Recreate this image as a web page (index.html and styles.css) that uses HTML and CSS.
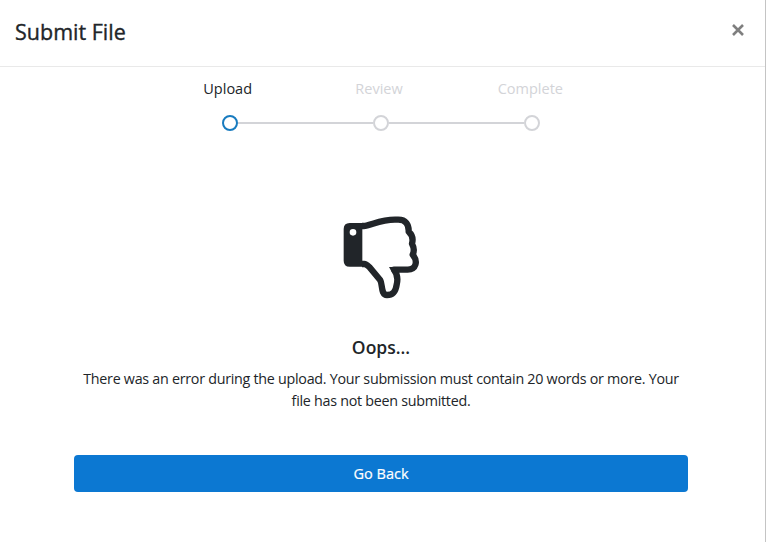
FILE: index.html
```
<!DOCTYPE html>
<html lang="en">
<head>
    <meta charset="UTF-8">
    <meta name="viewport" content="width=device-width, initial-scale=1.0">
    <title>Submit File</title>
    <link rel="stylesheet" href="styles.css">
</head>
<body>
    <div class="modal">
        <div class="modal-header">
            <h1 class="modal-title">Submit File</h1>
            <button class="close-button" aria-label="Close">
                <svg width="14" height="14" viewBox="0 0 14 14"><path d="M2 2L12 12M12 2L2 12"/></svg>
            </button>
        </div>
        <div class="modal-body">
            <ol class="steps">
                <li class="step active"><span class="step-label">Upload</span><span class="step-track"><span class="step-dot"></span></span></li>
                <li class="step"><span class="step-label">Review</span><span class="step-track"><span class="step-dot"></span></span></li>
                <li class="step"><span class="step-label">Complete</span><span class="step-track"><span class="step-dot"></span></span></li>
            </ol>
            <svg class="thumbs-down" viewBox="38 34 231 249">
                <path class="cuff" fill-rule="evenodd" d="M58 55H96V186H58Q40 186 40 168V73Q40 55 58 55ZM68 73A10 10 0 1 0 68 93A10 10 0 1 0 68 73Z"/>
                <path class="hand" d="M95 64H100C122 62 150 45 194 45H204C226 45 236 59 235 81C245 90 249 103 245 117C251 128 252 140 247 150C264 170 257 195 232 195H191C203 210 202 228 199 240C196 260 189 271 170 271C151 271 157 239 150 227L117 187Q107 178 102 178H95"/>
                <path class="cuff" d="M176 187H200V204H186Q181 196 176 187Z"/>
            </svg>
            <h2 class="error-title">Oops...</h2>
            <p class="error-text">There was an error during the upload. Your submission must contain 20 words or more. Your file has not been submitted.</p>
            <button class="back-button">Go Back</button>
        </div>
    </div>
</body>
</html>
```
FILE: styles.css
```
* {
    box-sizing: border-box;
}
body {
    margin: 0;
    background-color: #fff;
    color: #212529;
    font-family: "Open Sans", "Noto Sans", sans-serif;
    overflow: hidden;
}
.modal {
    height: 542px;
    border-right: 1px solid #c4c4c4;
}
.modal-header {
    display: flex;
    justify-content: space-between;
    align-items: flex-start;
    height: 67px;
    padding: 16px 20px 0 15px;
    border-bottom: 1px solid #e9e9e9;
}
.modal-title {
    margin: 0;
    font-size: 21.5px;
    font-weight: 500;
    line-height: 32px;
    -webkit-text-stroke: 0.35px;
}
.close-button {
    padding: 7px 0 0;
    border: none;
    background: none;
    cursor: pointer;
}
.close-button svg {
    display: block;
    fill: none;
    stroke: #7f7f7f;
    stroke-width: 2.6;
}
.modal-body {
    display: flex;
    flex-direction: column;
    align-items: center;
    padding-right: 3px;
}
.steps {
    display: flex;
    width: 454px;
    margin: 10px 0 0;
    padding: 0;
    list-style: none;
}
.step {
    flex: 1;
    color: #d3d4d8;
}
.step-label {
    display: block;
    padding-right: 4px;
    font-size: 14.5px;
    line-height: 24px;
    text-align: center;
}
.step-track {
    display: flex;
    align-items: center;
    height: 16px;
    margin-top: 14px;
}
.step-track::before,
.step-track::after {
    content: "";
    flex: 1;
    height: 2px;
    background-color: #d3d4d8;
}
.step:first-child .step-track::before,
.step:last-child .step-track::after {
    background: none;
}
.step-dot {
    width: 16px;
    height: 16px;
    border: 2px solid #d3d4d8;
    border-radius: 50%;
}
.active .step-label {
    color: #212529;
}
.active .step-dot {
    border-color: #187bbf;
}
.thumbs-down {
    width: 77px;
    height: 83px;
    margin-top: 85px;
}
.cuff {
    fill: #212529;
}
.hand {
    fill: none;
    stroke: #212529;
    stroke-width: 19;
    stroke-linejoin: round;
}
.error-title {
    margin: 35px 0 0;
    font-size: 17.5px;
    font-weight: 600;
    line-height: 26px;
}
.error-text {
    width: 614px;
    margin: 8px 0 0;
    font-size: 14.3px;
    line-height: 22px;
    letter-spacing: -0.27px;
    text-align: center;
}
.back-button {
    width: 614px;
    height: 37px;
    margin-top: 43px;
    padding: 0;
    border: none;
    border-radius: 4px;
    background-color: #0c78d2;
    color: #fff;
    font-family: inherit;
    font-size: 14.5px;
    font-weight: 500;
    -webkit-text-stroke: 0.2px;
    cursor: pointer;
}
```
